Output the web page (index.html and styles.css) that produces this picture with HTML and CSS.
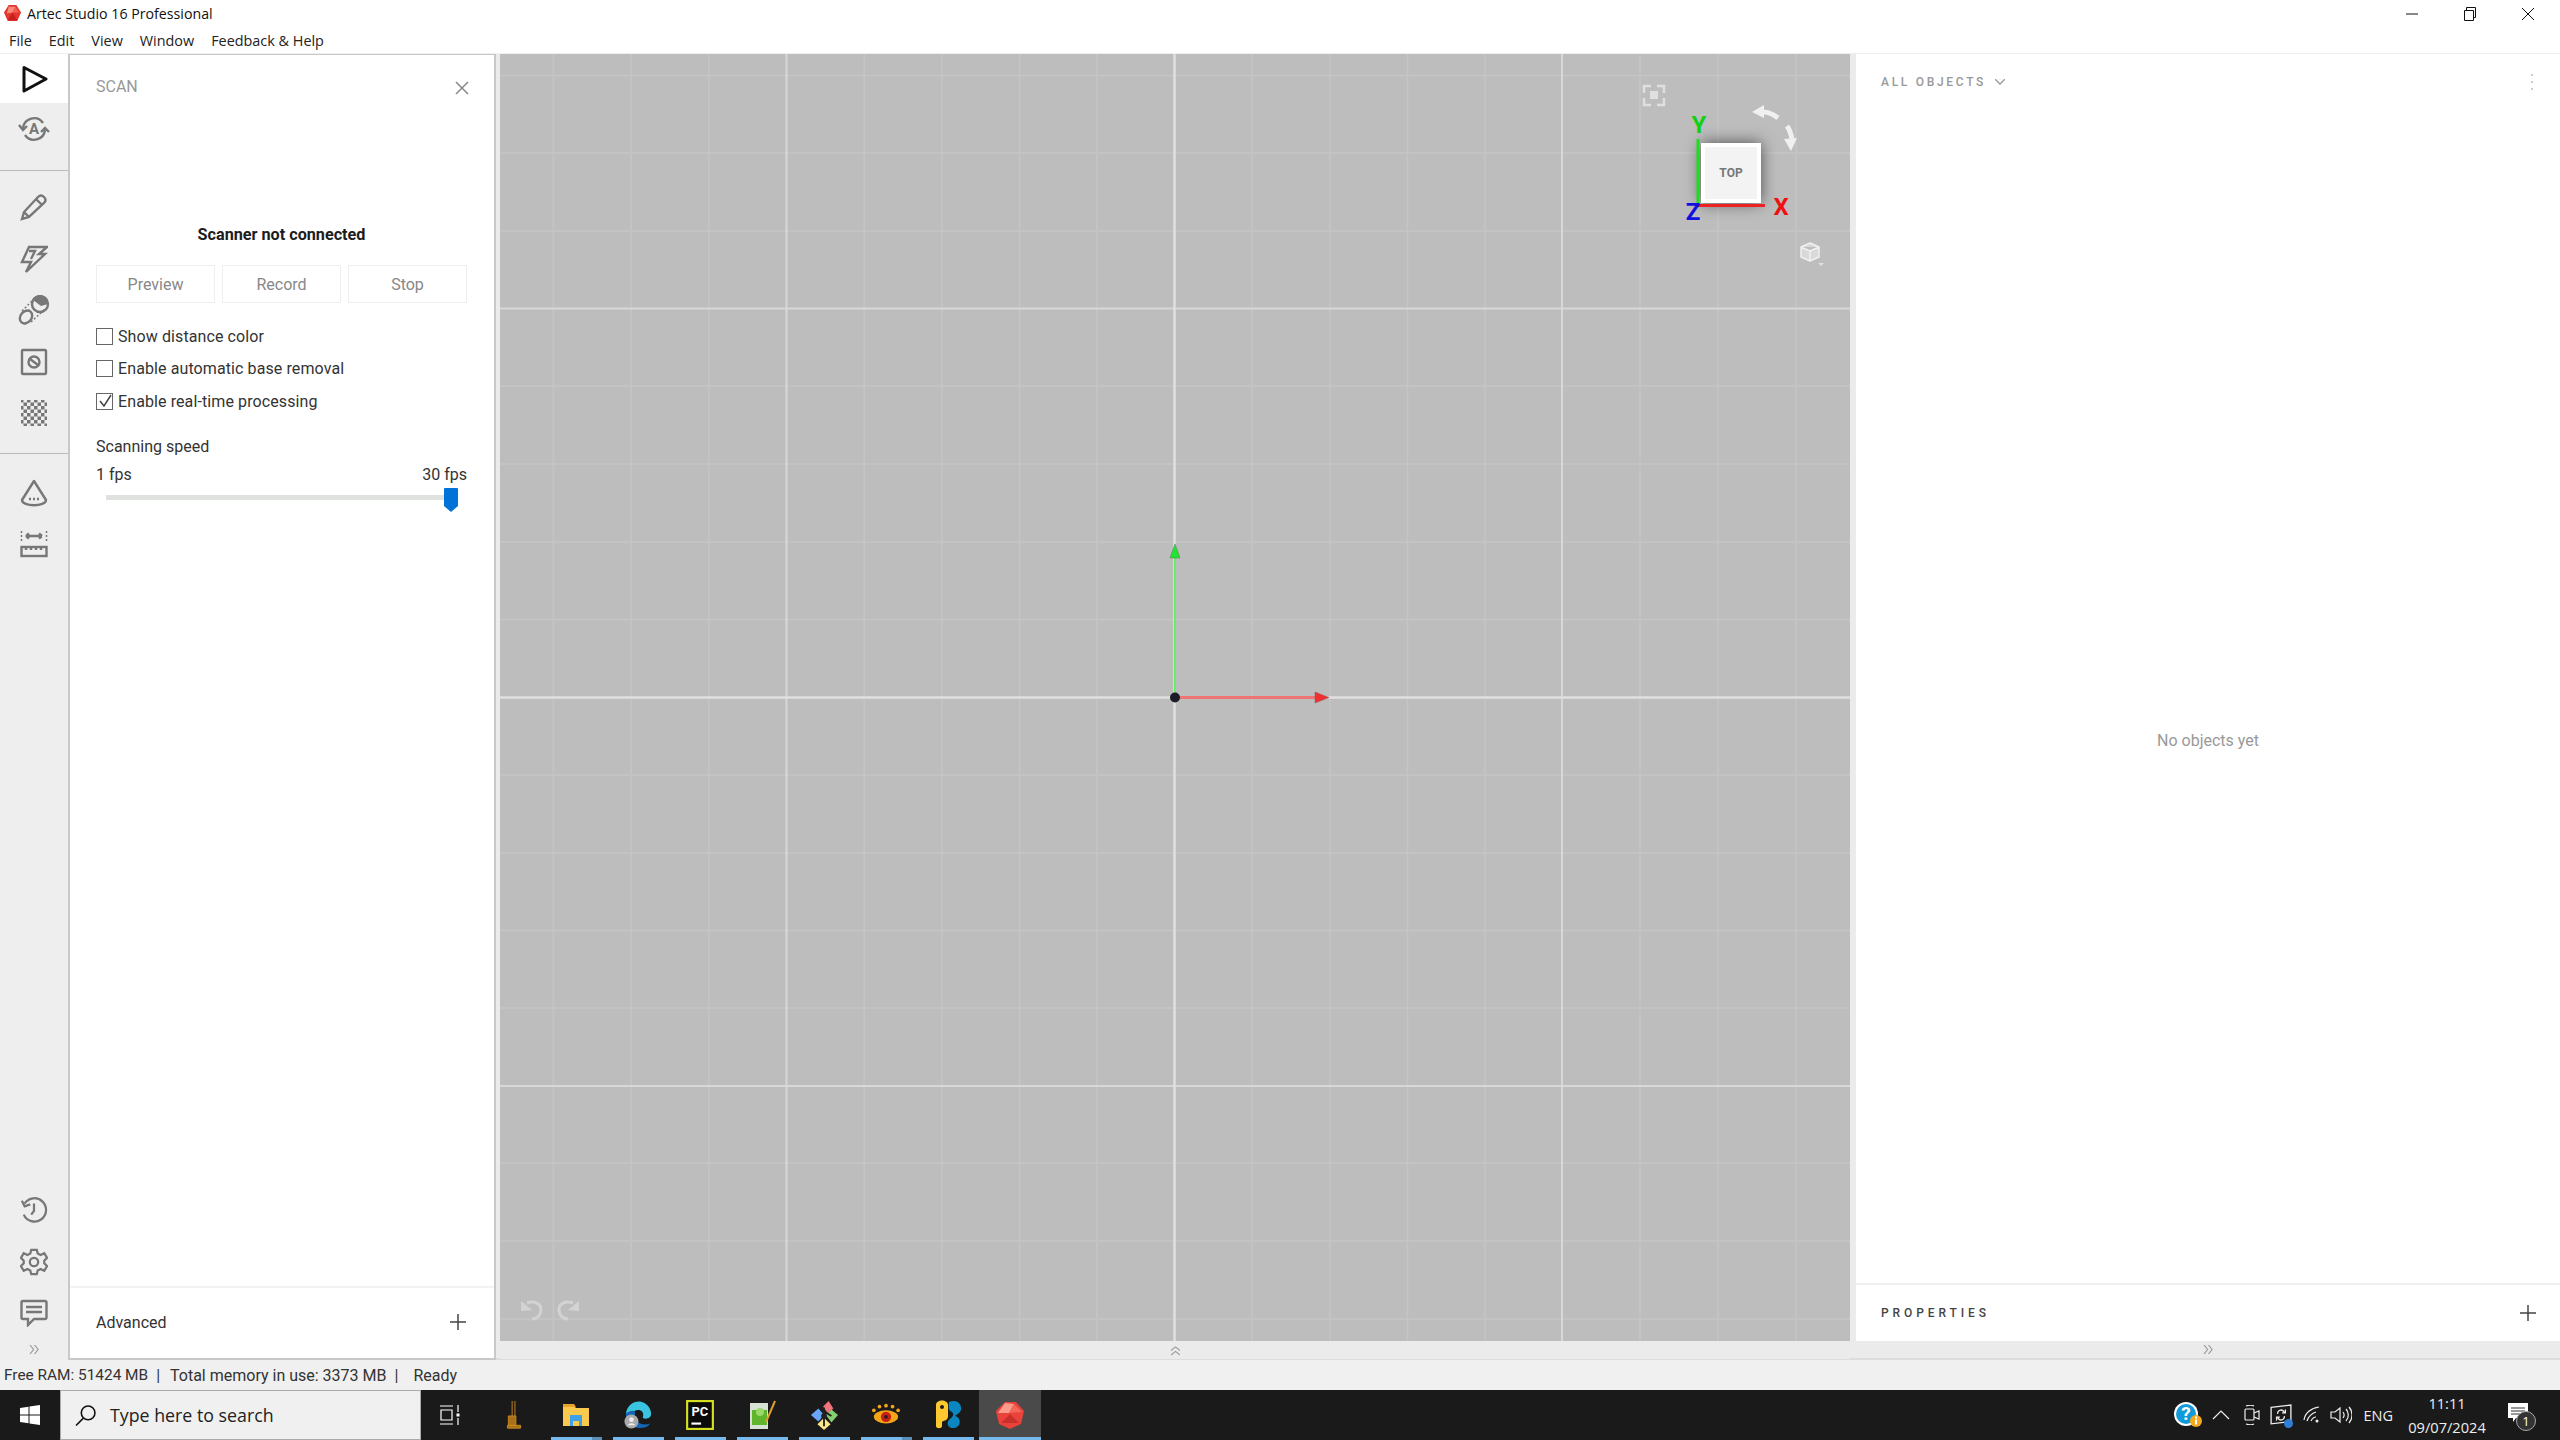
FILE: index.html
```html
<!DOCTYPE html>
<html lang="en">
<head>
<meta charset="utf-8">
<title>Artec Studio 16 Professional</title>
<link rel="stylesheet" href="styles.css">
</head>
<body>
<div class="app">
  <header class="titlebar">
    <svg class="applogo" viewBox="0 0 20 20"><polygon points="6,1 14,1 19,9 15,18 5,18 1,9" fill="#e5352f"/><polygon points="6,3 13,3 10,9 4,10" fill="#f98a7c"/><polygon points="13,3 17,9 10,9" fill="#f4604f"/><polygon points="5,17 15,17 10,9" fill="#c9201e"/></svg>
    <span class="apptitle">Artec Studio 16 Professional</span>
    <div class="winbtns">
      <svg class="winbtn" viewBox="0 0 14 14"><path d="M1 7h12" class="wl"/></svg>
      <svg class="winbtn" viewBox="0 0 14 14"><path d="M1.500 3.500h9v10h-9zM3.500 3.500v-3h9v10h-2" class="wl"/></svg>
      <svg class="winbtn" viewBox="0 0 14 14"><path d="M1 1l12 12M13 1L1 13" class="wl"/></svg>
    </div>
  </header>
  <nav class="menubar">
    <span class="menuitem">File</span><span class="menuitem">Edit</span><span class="menuitem">View</span><span class="menuitem">Window</span><span class="menuitem">Feedback &amp; Help</span>
  </nav>
  <main class="workspace">
    <aside class="sidebar">
      <div class="sidebtn active"><svg class="sico" viewBox="0 0 28 28"><path d="M4 2.500L26 14 4 26z" class="playline"/></svg></div>
      <div class="sidebtn"><svg class="sico wide" viewBox="0 0 32 28"><path d="M5 13a11 11 0 0 1 20-5M27 15a11 11 0 0 1-20 5" class="ic"/><path d="M1 10l4 5 4-4M23 17l4-4 4 4" class="ic"/><text x="16" y="19" class="autoA">A</text></svg></div>
      <div class="sideend first"></div>
      <div class="sidebtn"><svg class="sico" viewBox="0 0 28 28"><path d="M2 26l2-7L18 4c2-2 4-2 6 0s2 4 0 6L9 24zM4 19l5 5M16 6l6 6" class="ic"/></svg></div>
      <div class="sidebtn"><svg class="sico" viewBox="0 0 28 28"><path d="M9 2h18l-8 7h6L6 27l5-10H2zM9 6h6l-4 8" class="ic"/></svg></div>
      <div class="sidebtn"><svg class="sico wide" viewBox="0 0 30 30"><ellipse cx="7" cy="22" rx="5.500" ry="7" transform="rotate(40 7 22)" class="ic"/><circle cx="21" cy="9" r="8" class="ic"/><path d="M14 5a8 8 0 0 1 15 4l-7 2z" class="fillic"/><path d="M3 16L15 4M12 27L26 14" class="icdash"/></svg></div>
      <div class="sidebtn"><svg class="sico" viewBox="0 0 28 28"><rect x="2" y="2" width="24" height="24" rx="1" class="ic"/><circle cx="14" cy="14" r="5.500" class="ic"/><path d="M10 11l8 6" class="ic"/></svg></div>
      <div class="sidebtn"><svg class="sico" viewBox="0 0 28 28"><defs><pattern id="chk" width="7" height="7" patternUnits="userSpaceOnUse"><rect width="3.500" height="3.500" fill="#777"/><rect x="3.500" y="3.500" width="3.500" height="3.500" fill="#777"/></pattern></defs><rect x="1" y="1" width="26" height="26" fill="url(#chk)"/></svg></div>
      <div class="sideend second"></div>
      <div class="sidebtn"><svg class="sico" viewBox="0 0 28 28"><path d="M14 2L2 21c0 7 24 7 24 0z" class="icone"/><path d="M9 20h2M13 20h2M17 20h2" class="ic"/></svg></div>
      <div class="sidebtn"><svg class="sico" viewBox="0 0 28 28"><rect x="1.500" y="17" width="25" height="9" class="ic"/><path d="M6 17v3M11 17v3M16 17v3M21 17v3M6 6h16M6 6l3-2.500M6 6l3 2.500M22 6l-3-2.500M22 6l-3 2.500" class="ic"/><path d="M1.500 1v12M26.500 1v12" class="icdash"/></svg></div>
      <div class="spacer"></div>
      <div class="sidebtn"><svg class="sico" viewBox="0 0 30 30"><path d="M5 8a12.500 12.500 0 1 1-1 12M2 5l3 6 6-2M15 8v8l-3 4" class="ic"/></svg></div>
      <div class="sidebtn"><svg class="sico" viewBox="0 0 30 30"><path d="M12 2h6l1 4 3 1.500 4-2 3 5-3 3v3l3 3-3 5-4-2-3 1.500-1 4h-6l-1-4-3-1.500-4 2-3-5 3-3v-3l-3-3 3-5 4 2 3-1.500z" class="ic"/><circle cx="15" cy="15" r="4.500" class="ic"/></svg></div>
      <div class="sidebtn"><svg class="sico" viewBox="0 0 28 28"><path d="M3 2h22a1.500 1.500 0 0 1 1.500 1.500v15A1.500 1.500 0 0 1 25 20H14l-6 6v-6H3a1.500 1.500 0 0 1-1.500-1.500v-15A1.500 1.500 0 0 1 3 2zM6 8h16M6 13h16" class="ic"/></svg></div>
      <div class="sidecollapse"><svg class="dbl" viewBox="0 0 12 10"><path d="M1 0l4 5-4 5M6 0l4 5-4 5"/></svg></div>
    </aside>

    <section class="scanpanel">
      <div class="panelhead"><span class="paneltitle">SCAN</span><svg class="closeic" viewBox="0 0 14 14"><path d="M1 1l12 12M13 1L1 13"/></svg></div>
      <div class="scanbody">
        <div class="scanstate">Scanner not connected</div>
        <div class="scanbtns"><div class="scanbtn">Preview</div><div class="scanbtn">Record</div><div class="scanbtn">Stop</div></div>
        <label class="check"><span class="box"></span>Show distance color</label>
        <label class="check"><span class="box"></span>Enable automatic base removal</label>
        <label class="check"><span class="box"><svg class="tick" viewBox="0 0 14 14"><path d="M2 7l4 5 7-11"/></svg></span>Enable real-time processing</label>
        <div class="speedlabel">Scanning speed</div>
        <div class="fpsrow"><span>1 fps</span><span>30 fps</span></div>
        <div class="slider"><div class="track"></div><svg class="thumb" viewBox="0 0 14 24"><path d="M1 0h12a1 1 0 0 1 1 1v17l-7 6-7-6V1a1 1 0 0 1 1-1z"/></svg></div>
      </div>
      <div class="advanced"><span>Advanced</span><svg class="plus" viewBox="0 0 16 16"><path d="M0 8h16M8 0v16"/></svg></div>
    </section>

    <section class="viewcol">
      <div class="viewport">
        <svg class="scene" viewBox="500 54 1350 1287">
          <path class="minor" d="M553.400 54V1341M631 54V1341M708.800 54V1341M864.200 54V1341M941.900 54V1341M1019.600 54V1341M1097 54V1341M1252 54V1341M1330 54V1341M1407.500 54V1341M1485 54V1341M1640 54V1341M1718 54V1341M1796 54V1341M500 75.500H1850M500 153H1850M500 231H1850M500 386H1850M500 464H1850M500 542H1850M500 619.500H1850M500 775H1850M500 853H1850M500 930.500H1850M500 1008H1850M500 1163H1850M500 1241H1850M500 1319H1850"/>
          <path class="major" d="M786.500 54V1341M1562 54V1341M500 308.500H1850M500 1086H1850"/>
          <path class="axis" d="M1174.500 54V1341M500 697.500H1850"/>
          <path class="gline" d="M1175 556V697"/>
          <polygon class="garrow" points="1175,544 1170,558 1180,558"/>
          <path class="rline" d="M1176 697.500H1320"/>
          <polygon class="rarrow" points="1329,697.500 1315,692 1315,703"/>
          <circle cx="1175" cy="697.500" r="5" class="origin"/>
          <path class="fade" d="M1644 93v-7h7M1657 86h7v7M1664 98v7h-7M1651 105h-7v-7"/>
          <rect x="1650" y="91" width="8" height="8" class="fadefill"/>
          <path class="rot" d="M1763 112c5 0 10 2 15 6M1787 126c3 4 4 8 5 13"/>
          <polygon class="rotfill" points="1752,112 1764,105 1764,118"/>
          <polygon class="rotfill" points="1791,151 1784,139 1797,138"/>
          <rect x="1703" y="145" width="56" height="56" class="cube"/>
          <path class="yaxis" d="M1698 139V205"/>
          <path class="xaxis" d="M1698 205.500H1765"/>
          <text x="1699" y="133" class="lab laby">Y</text>
          <text x="1693" y="220" class="lab labz">Z</text>
          <text x="1781" y="215" class="lab labx">X</text>
          <text x="1731" y="177" class="toplab">TOP</text>
          <path class="cubeic" d="M1810 243l9 4v10l-9 4-9-4v-10zM1801 247l9 4 9-4M1810 251v10"/>
          <polygon class="fadefill" points="1818,263 1824,263 1821,266"/>
          <path class="undo" d="M527 1303c8-3 14 1 14 7 0 5-4 9-9 9M573 1303c-8-3-14 1-14 7 0 5 4 9 9 9"/>
          <polygon class="undofill" points="521,1301 521,1311 532,1310"/>
          <polygon class="undofill" points="579,1301 579,1311 568,1310"/>
        </svg>
      </div>
      <div class="strip"><svg class="dbl up" viewBox="0 0 12 10"><path d="M1 0l4 5-4 5M6 0l4 5-4 5"/></svg></div>
    </section>

    <aside class="rightpanel">
      <div class="objects">
        <div class="objhead"><span class="objtitle">ALL OBJECTS</span><svg class="chev" viewBox="0 0 10 6"><path d="M0 0l5 5 5-5"/></svg><span class="dots"><i></i><i></i><i></i></span></div>
        <div class="empty">No objects yet</div>
      </div>
      <div class="props"><span class="propstitle">PROPERTIES</span><svg class="plus" viewBox="0 0 16 16"><path d="M0 8h16M8 0v16"/></svg></div>
      <div class="strip"><svg class="dbl" viewBox="0 0 12 10"><path d="M1 0l4 5-4 5M6 0l4 5-4 5"/></svg></div>
    </aside>
  </main>
  <footer class="statusbar"><span class="ram">Free RAM: 51424 MB</span><span class="sep">|</span><span>Total memory in use: 3373 MB</span><span class="sep">|</span><span class="ready">Ready</span></footer>
  <div class="taskbar">
    <div class="startbtn"><svg class="winlogo" viewBox="0 0 20 20"><path d="M0 3l8.500-1.200V9.500H0zM9.500 1.600L20 0v9.500H9.500zM0 10.500h8.500v7.700L0 17zM9.500 10.500H20V20L9.500 18.400z"/></svg></div>
    <div class="search"><svg class="searchic" viewBox="0 0 20 20"><circle cx="12.500" cy="7.500" r="6.500"/><path d="M8 12.500L1 19.500"/></svg><span>Type here to search</span></div>
    <div class="tb"><svg class="tvic" viewBox="0 0 20 20"><path d="M0 1h13M0 19h13M1 5h11v10H1zM18 0v7M18 13v7"/><rect x="16.500" y="8.500" width="3" height="3" class="tvdot"/></svg></div>
    <div class="tb"><svg class="tbic" viewBox="0 0 24 32"><path d="M10 1v16M13 1v16M5 27h14v3H5zM6 17h8v10H6z" class="micro"/></svg></div>
    <div class="tb on stack"><svg class="tbic" viewBox="0 0 28 26"><path d="M1 3h10l3 3h13v18H1z" fill="#fcc94f"/><path d="M1 2h11l2 3H1z" fill="#e7a32c"/><path d="M8 13h12v11h-3v-5h-6v5H8z" fill="#3fa1e8"/></svg></div>
    <div class="tb on"><svg class="tbic" viewBox="0 0 30 32"><path d="M2 15C3 5 12 0 19 2c7 2 10 8 10 13 0 5-6 6-9 4 3-8-5-10-9-7-3 0-6 0-9 3z" fill="#39c5e0"/><path d="M2 15c0 10 8 15 15 15 5 0 9-2 11-5-8 3-15 0-16-7-1-3 1-6-1-6-4 0-8 1-9 3z" fill="#1466b8"/><circle cx="8" cy="23" r="7.500" fill="#aaa"/><circle cx="8" cy="21" r="2.500" fill="#eee"/><path d="M4 27c1-3 7-3 8 0z" fill="#eee"/></svg></div>
    <div class="tb on"><svg class="tbic" viewBox="0 0 26 28"><rect width="26" height="28" fill="#d4e020"/><rect x="2" y="2" width="22" height="24" fill="#0b0b0b"/><rect x="5" y="21" width="9" height="2" fill="#fff"/><text x="5" y="15" class="pc">PC</text></svg></div>
    <div class="tb on"><svg class="tbic" viewBox="0 0 28 30"><path d="M2 3h18v26H2z" fill="#d8e2d4"/><path d="M4 10h15v15H4z" fill="#5fb52c"/><circle cx="12" cy="12" r="4" fill="#9ad96a"/><path d="M18 22L27 1" stroke="#d99e2b" stroke-width="2"/></svg></div>
    <div class="tb on"><svg class="tbic" viewBox="0 0 30 32"><polygon points="20,1 25,9 19,14 14,7" fill="#f2737c"/><polygon points="9,9 15,16 9,23 1,16" fill="#6aa6f8"/><polygon points="23,10 30,16 23,24 17,16" fill="#84cf6e"/><polygon points="15,19 22,26 15,32 8,26" fill="#fde68a"/><circle cx="15" cy="17" r="3" fill="#222"/><path d="M15 8v20M18 14l5 3" stroke="#222" stroke-width="2"/></svg></div>
    <div class="tb on stack"><svg class="tbic" viewBox="0 0 30 24"><ellipse cx="15" cy="14" rx="13" ry="7" fill="#f2a516"/><circle cx="15" cy="14" r="5.500" fill="#c81e14"/><circle cx="15" cy="14" r="2" fill="#222"/><circle cx="8" cy="3" r="2" fill="#f2a516"/><circle cx="15" cy="2" r="2" fill="#f2a516"/><circle cx="22" cy="3" r="2" fill="#f2a516"/><circle cx="2" cy="7" r="2" fill="#f2a516"/><circle cx="28" cy="7" r="2" fill="#f2a516"/></svg></div>
    <div class="tb on"><svg class="tbic" viewBox="0 0 28 30"><path d="M2 5c0-6 12-6 12 0v11c0 5-4 4-6 6v4c0 3-6 3-6 0z" fill="#fdc92f"/><circle cx="8" cy="7" r="2" fill="#1b1b1b"/><path d="M15 2c8-3 13 2 12 8-1 3-4 4-6 6 6 1 7 11-1 12-6 1-8-5-5-8 3-3 6-5 3-8-2-1-4-1-3-10z" fill="#0a87c0"/></svg></div>
    <div class="tb on active"><svg class="tbic" viewBox="0 0 28 28"><polygon points="9,1 20,1 28,10 25,23 14,28 3,23 0,10" fill="#e8423a"/><polygon points="9,2 18,3 13,12 2,12" fill="#fb9b8b"/><polygon points="18,3 26,11 13,12" fill="#f3665a"/><polygon points="5,22 23,22 14,13" fill="#c9302a"/></svg></div>
    <div class="spacer"></div>
    <div class="tray">
      <svg class="help" viewBox="0 0 30 28"><circle cx="13" cy="13" r="12" fill="#fff"/><circle cx="13" cy="13" r="10" fill="#119ad8"/><text x="13" y="19" class="q">?</text><circle cx="23" cy="20" r="6" fill="#f4a91c"/><rect x="22" y="18.500" width="2" height="5" fill="#fff"/><rect x="22" y="15.500" width="2" height="2" fill="#fff"/></svg>
      <svg class="trayic chevup" viewBox="0 0 18 10"><path d="M1 9l8-8 8 8"/></svg>
      <svg class="trayic cam" viewBox="0 0 16 20"><rect x="1" y="4" width="9" height="11" rx="1"/><path d="M10 8l5-2v8l-5-2M2 1c3-1 6-1 8 0M2 19c3 1 6 1 8 0"/></svg>
      <span class="screenwrap"><svg class="trayic screen" viewBox="0 0 20 20"><path d="M1 3l18-2v15l-18 2zM7 9a3 3 0 0 1 6-1M13 11a3 3 0 0 1-6 1M11 8h3V5M9 12H6v3"/></svg><i class="dotblue"></i></span>
      <svg class="trayic wifi" viewBox="0 0 18 18"><path d="M1 14C2 7 8 2 16 1M4 15c1-4 5-8 9-9M8 15c1-2 3-4 5-4"/><circle cx="14" cy="15" r="1.500" class="wdot"/></svg>
      <svg class="trayic spk" viewBox="0 0 22 20"><path d="M1 7h4l5-4v14l-5-4H1zM13 7a5 5 0 0 1 0 6M16 4a9 9 0 0 1 0 12M19 2a12 12 0 0 1 0 16"/></svg>
      <span class="lang">ENG</span>
      <div class="clock"><span>11:11</span><span>09/07/2024</span></div>
      <div class="notify"><svg class="noteic" viewBox="0 0 20 20"><path d="M0 0h20v15H8l-3 4v-4H0z"/><path d="M3 5h14M3 8h14M3 11h9" class="notelines"/></svg><span class="notebadge">1</span></div>
    </div>
  </div>
</div>
</body>
</html>
```

FILE: styles.css
```css
* { box-sizing: border-box; }
html, body { margin: 0; padding: 0; }
body { width: 2560px; height: 1440px; overflow: hidden; font-family: "Roboto", "Liberation Sans", sans-serif; background: #f0f0f0; color: #222; }
svg { display: block; flex: none; }
.app { display: flex; flex-direction: column; width: 2560px; height: 1440px; }
.spacer { flex: 1; }

.titlebar { height: 27px; background: #fff; display: flex; align-items: center; padding-left: 3px; font-family: "Open Sans", sans-serif; font-size: 14.200px; color: #111; }
.applogo { width: 19px; height: 19px; margin-right: 5px; }
.winbtns { margin-left: auto; display: flex; gap: 44px; padding-right: 25px; }
.winbtn { width: 14px; height: 14px; }
.wl { fill: none; stroke: #111; stroke-width: 1; }

.menubar { height: 26px; background: #fff; display: flex; align-items: center; padding-left: 9px; gap: 14px; font-family: "Open Sans", sans-serif; font-size: 14.400px; color: #222; }
.menuitem { padding-right: 3px; }

.workspace { height: 1307px; display: flex; background: #ececec; border-top: 1px solid #efefef; }
.sidebar { width: 70px; border-right: 2px solid #c8c8c8; background: #eeeeee; display: flex; flex-direction: column; align-items: stretch; }
.sidebtn { height: 51.500px; display: flex; align-items: center; justify-content: center; flex: none; }
.sidebtn.active { height: 49px; background: #fff; }
.sideend.first { height: 1px; margin-top: 15px; margin-bottom: 11px; background: #bbb; flex: none; }
.sideend.second { height: 1px; margin-top: 14px; margin-bottom: 13px; background: #bbb; flex: none; }
.sico { width: 28px; height: 28px; }
.sico.wide { width: 32px; height: 30px; }
.ic { fill: none; stroke: #777; stroke-width: 2.400; }
.icone { fill: none; stroke: #777; stroke-width: 2.400; stroke-linejoin: round; }
.icdash { fill: none; stroke: #777; stroke-width: 1.500; stroke-dasharray: 2 2; }
.fillic { fill: #777; }
.playline { fill: none; stroke: #111; stroke-width: 3; stroke-linejoin: round; }
.autoA { font-size: 15px; font-weight: 700; fill: #777; text-anchor: middle; font-family: "Roboto", sans-serif; }
.sidecollapse { height: 21px; display: flex; align-items: center; justify-content: center; }
.dbl { width: 11px; height: 9px; }
.dbl path { fill: none; stroke: #999; stroke-width: 1.300; }
.dbl.up { transform: rotate(-90deg); }

.scanpanel { width: 426px; background: #fff; border-right: 2px solid #c8c8c8; border-bottom: 2px solid #c8c8c8; border-top: 1px solid #c8c8c8; display: flex; flex-direction: column; }
.panelhead { height: 64px; padding: 0 25px 2px 26px; display: flex; align-items: center; justify-content: space-between; }
.paneltitle { font-size: 16px; color: #999; }
.closeic { width: 14px; height: 14px; margin-top: 3px; }
.closeic path { fill: none; stroke: #888; stroke-width: 1.500; }
.scanbody { flex: 1; padding: 0 27px 0 26px; display: flex; flex-direction: column; }
.scanstate { margin-top: 106px; text-align: center; font-weight: 700; font-size: 16.200px; line-height: 20px; color: #1c1c1c; }
.scanbtns { display: flex; gap: 7px; margin-top: 20px; margin-bottom: 17px; }
.scanbtn { flex: 1; height: 38px; border: 1px solid #eeeeee; display: flex; align-items: center; justify-content: center; font-size: 16px; color: #888; }
.check { display: flex; align-items: center; height: 32.500px; font-size: 16px; letter-spacing: .1px; color: #333; gap: 5px; }
.box { width: 17px; height: 17px; border: 1.500px solid #666; background: #fff; display: flex; align-items: center; justify-content: center; flex: none; }
.tick { width: 14px; height: 14px; }
.tick path { fill: none; stroke: #444; stroke-width: 1.500; }
.speedlabel { margin-top: 19px; font-size: 16px; line-height: 20px; color: #333; }
.fpsrow { display: flex; justify-content: space-between; margin-top: 8px; font-size: 16px; line-height: 20px; color: #333; }
.slider { position: relative; height: 30px; margin-top: 3px; padding-top: 7px; }
.track { height: 5px; margin: 0 10px; background: #e0e2e0; }
.thumb { position: absolute; right: 9px; top: 0; width: 14px; height: 24px; }
.thumb path { fill: #0072d8; }
.advanced { height: 72px; padding: 0 27px 2px 26px; border-top: 2px solid #f2f2f2; display: flex; align-items: center; justify-content: space-between; font-size: 16px; color: #333; }
.plus { width: 16px; height: 16px; margin-right: 1px; }
.plus path { fill: none; stroke: #444; stroke-width: 1.500; }

.viewcol { width: 1360px; padding: 0 6px 0 4px; display: flex; flex-direction: column; background: #ebebeb; border-bottom: 2px solid #dcdcdc; }
.viewport { height: 1287px; flex: none; background: #bdbdbd; }
.scene { width: 1350px; height: 1287px; }
.minor { stroke: #c5c5c5; stroke-width: 1.500; fill: none; }
.major { stroke: #d8d8d8; stroke-width: 2; fill: none; }
.axis { stroke: #e0e0e0; stroke-width: 2.500; fill: none; }
.gline { stroke: #66ee66; stroke-width: 2; }
.garrow { fill: #1fe62f; stroke: #5a7a5a; stroke-width: .5; }
.rline { stroke: #ef7474; stroke-width: 3; }
.rarrow { fill: #f22f2f; stroke: #8a5a5a; stroke-width: .5; }
.origin { fill: #1c1c28; }
.fade { fill: none; stroke: #dfdfdf; stroke-width: 2.500; }
.fadefill { fill: #e0e0e0; }
.rot { fill: none; stroke: #f0f0f0; stroke-width: 5; }
.rotfill { fill: #f0f0f0; }
.cube { fill: #f3f3f3; stroke: #fff; stroke-width: 4; filter: drop-shadow(0 0 8px rgba(0,0,0,.6)); }
.yaxis { stroke: #1edc1e; stroke-width: 3; }
.xaxis { stroke: #ee2222; stroke-width: 3; }
.lab { font-family: "Roboto", sans-serif; font-size: 24px; font-weight: 700; text-anchor: middle; }
.laby { fill: #10d010; }
.labz { fill: #1010e0; }
.labx { fill: #ee1111; }
.toplab { font-family: "Roboto", sans-serif; font-size: 12px; font-weight: 700; fill: #777; text-anchor: middle; }
.cubeic { fill: #d9d9d9; stroke: #f0f0f0; stroke-width: 1.500; stroke-linejoin: round; }
.undo { fill: none; stroke: #d3d3d3; stroke-width: 3; }
.undofill { fill: #d3d3d3; }
.strip { height: 18px; flex: none; display: flex; align-items: center; justify-content: center; background: #ebebeb; }

.rightpanel { flex: 1; display: flex; flex-direction: column; background: #fff; border-bottom: 2px solid #dcdcdc; }
.objects { height: 1231px; flex: none; border-bottom: 2px solid #f0f0f0; display: flex; flex-direction: column; }
.objhead { height: 56px; flex: none; padding: 0 25px; display: flex; align-items: center; font-size: 12px; letter-spacing: 2.700px; color: #999; }
.objtitle { font-weight: 500; }
.chev { width: 10px; height: 6px; margin-left: 9px; }
.chev path { fill: none; stroke: #999; stroke-width: 1.300; }
.dots { margin-left: auto; display: flex; flex-direction: column; gap: 5px; margin-right: 2px; }
.dots i { width: 2px; height: 2px; background: #ccc; display: block; }
.empty { flex: 1; display: flex; align-items: center; justify-content: center; padding-top: 87px; font-size: 16px; color: #999; }
.props { height: 56px; flex: none; padding: 0 23px 0 25px; display: flex; align-items: center; justify-content: space-between; font-size: 12px; letter-spacing: 3.900px; font-weight: 500; color: #444; }
.rightpanel .strip { flex: 1; }

.statusbar { height: 30px; flex: none; background: #f0f0f0; display: flex; align-items: center; padding-left: 4px; font-size: 16px; color: #333; }
.ram { font-size: 15.400px; }
.sep { margin: 0 10px 0 8px; }
.ready { margin-left: 5px; }

.taskbar { height: 50px; flex: none; background: #1a1a1a; display: flex; align-items: stretch; }
.startbtn { width: 60px; display: flex; align-items: center; justify-content: center; }
.winlogo { width: 20px; height: 20px; }
.winlogo path { fill: #fff; }
.search { width: 361px; background: #f0f0f0; border: 1px solid #aaa; display: flex; align-items: center; padding-left: 14px; gap: 14px; font-family: "Open Sans", sans-serif; font-size: 17.800px; color: #222; }
.searchic { width: 21px; height: 21px; }
.searchic circle, .searchic path { fill: none; stroke: #111; stroke-width: 1.500; }
.tb { width: 62px; display: flex; align-items: center; justify-content: center; position: relative; }
.tb.on::after { content: ""; position: absolute; left: 6px; right: 5px; bottom: 0; height: 3px; background: #76b9ed; }
.tb.stack::before { content: ""; position: absolute; right: 5px; bottom: 0; width: 10px; height: 3px; background: #5a8fbc; z-index: 1; }
.tb.active { background: #4a4a4a; }
.tb.active::after { left: 0; right: 0; }
.tbic { width: 28px; height: 30px; }
.tvic { width: 20px; height: 20px; margin-right: 4px; }
.tvic path { fill: none; stroke: #fff; stroke-width: 1.200; }
.tvdot { fill: #fff; }
.micro { fill: #a9701a; stroke: #c98a1e; stroke-width: 1; }
.pc { font-family: "Roboto", sans-serif; font-size: 12px; font-weight: 700; fill: #fff; }
.tray { display: flex; align-items: center; padding-right: 32px; color: #fff; }
.help { width: 30px; height: 28px; margin-right: 9px; }
.q { font-family: "Roboto", sans-serif; font-size: 19px; font-weight: 700; fill: #fff; text-anchor: middle; }
.trayic path, .trayic rect { fill: none; stroke: #eee; stroke-width: 1.200; }
.chevup { width: 18px; height: 10px; margin-right: 14px; }
.cam { width: 16px; height: 20px; margin-right: 10px; }
.screenwrap { position: relative; margin-right: 11px; }
.screen { width: 22px; height: 22px; }
.dotblue { position: absolute; right: -1px; bottom: -2px; width: 9px; height: 9px; border-radius: 50%; background: #2f7fd6; }
.wifi { width: 18px; height: 18px; margin-right: 9px; }
.wdot { fill: #eee; }
.spk { width: 22px; height: 20px; margin-right: 11px; }
.lang { font-family: "Open Sans", sans-serif; font-size: 14.500px; margin-right: 14px; color: #eee; }
.clock { display: flex; flex-direction: column; align-items: center; font-family: "Open Sans", sans-serif; font-size: 14.600px; line-height: 24px; color: #eee; margin-right: 21px; width: 80px; }
.notify { position: relative; width: 20px; height: 24px; }
.noteic { width: 20px; height: 20px; }
.noteic path { fill: #fff; }
.noteic .notelines { fill: none; stroke: #333; stroke-width: 1; }
.notebadge { position: absolute; left: 8px; top: 8px; width: 20px; height: 20px; border-radius: 50%; background: #333; border: 1px solid #aaa; color: #fff; font-size: 13px; font-family: "Open Sans", sans-serif; display: flex; align-items: center; justify-content: center; }
```
